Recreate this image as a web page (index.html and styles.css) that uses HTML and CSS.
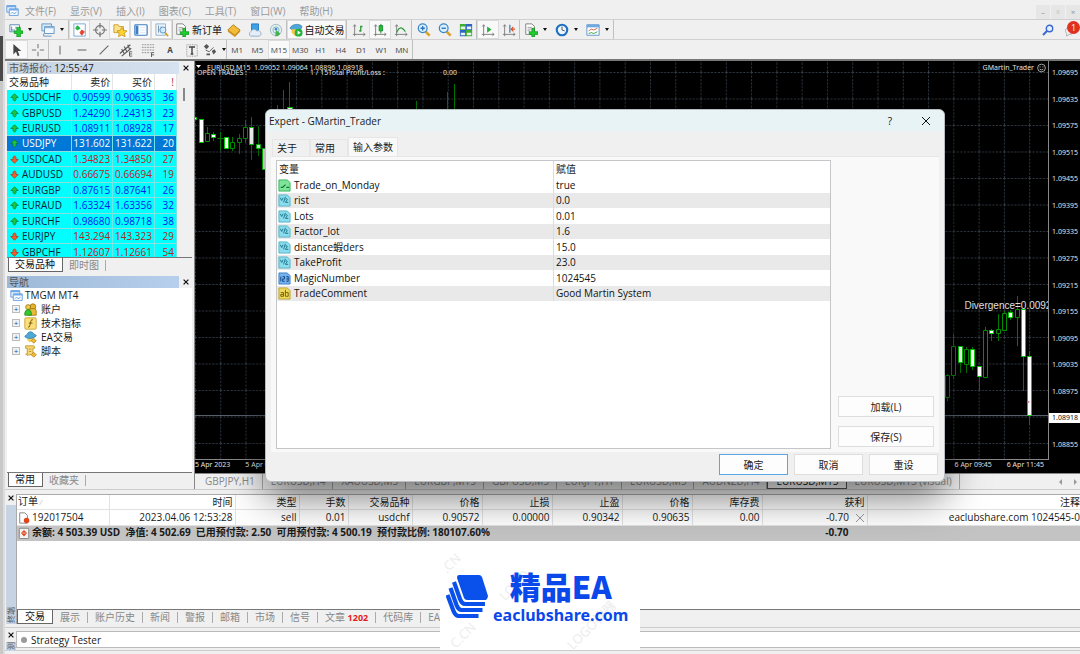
FILE: index.html
```html
<!DOCTYPE html>
<html lang="zh-CN">
<head>
    <meta charset="UTF-8">
    <meta name="viewport" content="width=device-width, initial-scale=1.0">
    <title>TMGM MT4</title>
    <link rel="stylesheet" href="styles.css">
</head>
<body>
    <!-- Shared icons -->
    <svg class="sprite" aria-hidden="true">
        <symbol id="i-windows" viewBox="0 0 16 16"><path d="M1 2h11v8H1z" fill="#eaf4ff" stroke="#4b8fd8"/><path d="M1 2h11v2H1z" fill="#6fa9e6"/><path d="M4 6h11v8H4z" fill="#fff" stroke="#4b8fd8"/><path d="M4 6h11v2H4z" fill="#6fa9e6"/><path d="M6 12l2-2 2 2 3-2" fill="none" stroke="#4b8fd8"/></symbol>
        <symbol id="i-newchart" viewBox="0 0 16 16"><path d="M1 2h11v8H1z" fill="#fff" stroke="#4f83ad"/><path d="M3 4v5M3 8h4M8 4v3" stroke="#4f83ad" fill="none"/><path d="M9 5h4v4h3v3h-3v4H9v-4H6V9h3z" fill="#1fd02f" stroke="#0b8a1a" stroke-width=".8"/></symbol>
        <symbol id="i-profiles" viewBox="0 0 16 16"><path d="M1 1h11v8H1z" fill="#d9eafa" stroke="#5b8fc0"/><path d="M4 4h11v8H4z" fill="#f2f8fe" stroke="#5b8fc0"/><path d="M4 4h11v2H4z" fill="#86b4dd"/><path d="M3 12v3h9" fill="none" stroke="#5b8fc0"/></symbol>
        <symbol id="i-market" viewBox="0 0 16 16"><path d="M1 1h13v14H1z" fill="#fff" stroke="#6fa3d4"/><path d="M5 3l3 3-3 2-2-2z" fill="#1eb53a" stroke="#1eb53a"/><path d="M10 8l3 2-3 4-2-3z" fill="#e5432a" stroke="#e5432a"/></symbol>
        <symbol id="i-target" viewBox="0 0 16 16"><circle cx="8" cy="8" r="5" fill="none" stroke="#777" stroke-width="1.4"/><path d="M8 0v6M8 10v6M0 8h6M10 8h6" stroke="#777" stroke-width="1.4"/></symbol>
        <symbol id="i-star" viewBox="0 0 16 16"><path d="M1 2h5l1 2h5v7H1z" fill="#fbe28a" stroke="#c89b26"/><path d="M10 5l2 3.5 4 .5-3 2.6.8 4.1L10 13.800l-3.800 1.900.8-4.100L4.500 9l3.700-.5z" fill="#ffd22e" stroke="#c08a10" stroke-width=".8"/></symbol>
        <symbol id="i-panel" viewBox="0 0 16 16"><rect x="1" y="2" width="14" height="12" rx="1" fill="#fff" stroke="#3f7fc0" stroke-width="1.400"/><path d="M2 3h3v10H2z" fill="#3f7fc0"/><path d="M7 5h6M7 8h6M7 11h6" stroke="#d7e5f3"/></symbol>
        <symbol id="i-tester" viewBox="0 0 16 16"><path d="M1 1h11v13H1z" fill="#edf4fb" stroke="#8caeca"/><path d="M4 3v8M7 4v6" stroke="#6b8aa4"/><circle cx="9" cy="8" r="3.500" fill="#cfe8fb" fill-opacity=".8" stroke="#4e92cc"/><path d="M11.500 11l3.500 4" stroke="#d8a22c" stroke-width="2"/></symbol>
        <symbol id="i-order" viewBox="0 0 16 16"><path d="M2 1h7l3 3v9H2z" fill="#fff" stroke="#777"/><path d="M4 5h5M4 7h5M4 9h3" stroke="#999"/><path d="M9 6h3v4h4v3h-4v3H9v-3H6v-3h3z" fill="#1fd02f" stroke="#0b8a1a" stroke-width=".8"/></symbol>
        <symbol id="i-gold" viewBox="0 0 16 16"><path d="M1 8l6-6 8 6-6 6z" fill="#f1bd3a" stroke="#b07a12"/><path d="M1 8v2l8 6v-2zM9 16l6-6V8l-6 6z" fill="#cf9220"/></symbol>
        <symbol id="i-cloud" viewBox="0 0 16 16"><path d="M4 1h8v8H4z" fill="#3aa0e8" stroke="#2677bd"/><path d="M3 15a3 3 0 0 1 0-5 4 4 0 0 1 7-1 3 3 0 0 1 3 6z" fill="#e5eef8" stroke="#8ea8c6"/></symbol>
        <symbol id="i-signal" viewBox="0 0 16 16"><circle cx="8" cy="8" r="6.500" fill="#e4eef2" stroke="#9db6bd"/><circle cx="8" cy="8" r="3.500" fill="none" stroke="#7bb5b8"/><path d="M8 8l-1 7a6 6 0 0 0 6-3z" fill="#45b14e"/><circle cx="8" cy="7" r="1.500" fill="#3e8dd0"/></symbol>
        <symbol id="i-auto" viewBox="0 0 16 16"><path d="M1 6c2-5 11-6 14-2l-2 4H4z" fill="#4fa6d8" stroke="#2a76a8" stroke-width=".7"/><path d="M3 7h9v5l-5 3-4-4z" fill="#f2c84a"/><circle cx="11" cy="11" r="4.500" fill="#1eb53a"/><path d="M9.800 8.500v5l3.700-2.500z" fill="#fff"/></symbol>
        <symbol id="i-bars" viewBox="0 0 16 16"><path d="M3 2v13M1 13h14M1.500 4L3 2l1.500 2M13 11.500l2 1.500-2 1.500" fill="none" stroke="#777"/><path d="M10 3v7M10 4h2M8 9h2" stroke="#2a9a35" stroke-width="1.500"/></symbol>
        <symbol id="i-candle" viewBox="0 0 16 16"><path d="M3 2v13M1 13h14M1.500 4L3 2l1.500 2M13 11.500l2 1.500-2 1.500" fill="none" stroke="#777"/><path d="M9 1v11" stroke="#15862a"/><path d="M7 3h4v6H7z" fill="#22c23a" stroke="#15862a"/></symbol>
        <symbol id="i-line" viewBox="0 0 16 16"><path d="M3 2v13M1 13h14M1.500 4L3 2l1.500 2M13 11.500l2 1.500-2 1.500" fill="none" stroke="#777"/><path d="M3 11c3-7 6-7 10-1" fill="none" stroke="#2a9a35" stroke-width="1.300"/></symbol>
        <symbol id="i-zoomin" viewBox="0 0 16 16"><path d="M9.500 9.500l5 5" stroke="#d8a22c" stroke-width="3"/><circle cx="6.500" cy="6" r="5" fill="#d8effd" stroke="#3b86c6" stroke-width="1.400"/><path d="M4 6h5M6.500 3.500v5" stroke="#2b76b8" stroke-width="1.500"/></symbol>
        <symbol id="i-zoomout" viewBox="0 0 16 16"><path d="M9.500 9.500l5 5" stroke="#d8a22c" stroke-width="3"/><circle cx="6.500" cy="6" r="5" fill="#d8effd" stroke="#3b86c6" stroke-width="1.400"/><path d="M4 6h5" stroke="#2b76b8" stroke-width="1.500"/></symbol>
        <symbol id="i-tile" viewBox="0 0 16 16"><path d="M1 1h7v7H1zM8 8h7v7H8z" fill="#3fae2e"/><path d="M8 1h7v7H8zM1 8h7v7H1z" fill="#2f66c4"/><path d="M2 4h5v3H2zM9 4h5v3H9zM2 11h5v3H2zM9 11h5v3H9z" fill="#e7f1f6"/></symbol>
        <symbol id="i-scroll" viewBox="0 0 16 16"><path d="M3 2v13M1 13h14M1.500 4L3 2l1.500 2M13 11.500l2 1.500-2 1.500" fill="none" stroke="#777"/><path d="M7 4l5 3.500L7 11z" fill="#22b03a"/></symbol>
        <symbol id="i-shift" viewBox="0 0 16 16"><path d="M3 2v13M1 13h14M1.500 4L3 2l1.500 2M13 11.500l2 1.500-2 1.500" fill="none" stroke="#777"/><path d="M9 2v9" stroke="#3b7ab8" stroke-width="1.400"/><path d="M15 7h-4M13 4.500L10.500 7 13 9.500" fill="none" stroke="#d8532a" stroke-width="1.400"/></symbol>
        <symbol id="i-clock" viewBox="0 0 16 16"><circle cx="8" cy="8" r="6" fill="#eaf6ff" stroke="#1f6fc0" stroke-width="2.400"/><path d="M8 4v4l3 1" fill="none" stroke="#444"/></symbol>
        <symbol id="i-template" viewBox="0 0 16 16"><path d="M1 2h14v12H1z" fill="#fff" stroke="#4f8fca"/><path d="M1 2h14v3H1z" fill="#6fa9e0"/><path d="M3 9l3-2 3 1 4-2" fill="none" stroke="#d0552f"/><path d="M3 12l3-1 3 1 4-2" fill="none" stroke="#2a9a35"/></symbol>
        <symbol id="i-cursor" viewBox="0 0 16 16"><path d="M5 1v12l3-3 2 5 2-1-2-5h4z" fill="#444"/></symbol>
        <symbol id="i-cross" viewBox="0 0 16 16"><path d="M8 1v5M8 10v5M1 8h5M10 8h5" stroke="#777" stroke-width="1.200"/></symbol>
        <symbol id="i-vline" viewBox="0 0 16 16"><path d="M8 3v10" stroke="#666" stroke-width="1.200"/></symbol>
        <symbol id="i-hline" viewBox="0 0 16 16"><path d="M3 8h10" stroke="#666" stroke-width="1.200"/></symbol>
        <symbol id="i-trend" viewBox="0 0 16 16"><path d="M3 13L13 3" stroke="#666" stroke-width="1.200"/></symbol>
        <symbol id="i-channel" viewBox="0 0 16 16"><path d="M1 12L13 2M3 15L14 6M3 7l3 5M6 4l3 6M10 2l2 5" stroke="#555" stroke-width="1.200"/><path d="M15 10h-3v5h3M12 12.500h3" fill="none" stroke="#555"/></symbol>
        <symbol id="i-fibo" viewBox="0 0 16 16"><path d="M1 2h14M1 5h14M1 8h14M1 11h10" stroke="#888" stroke-dasharray="2 1"/><path d="M15 11h-3v5M12 13.500h3" fill="none" stroke="#555"/></symbol>
        <symbol id="i-shapes" viewBox="0 0 16 16"><path d="M1 4l3-3 3 3-3 3zM10 9l3-2 2 3-3 3zM4 12h4v2H4z" fill="#555"/><path d="M3 8l4 2 5-5" fill="none" stroke="#555"/></symbol>
        <symbol id="i-label" viewBox="0 0 16 16"><rect x="2" y="2" width="12" height="13" fill="none" stroke="#888" stroke-dasharray="1 1"/><path d="M4.500 4.500h7M8 4.500v8M6.500 12.500h3" stroke="#444" stroke-width="1.600"/></symbol>
        <symbol id="i-up" viewBox="0 0 12 12"><path d="M6 1l5 5H8v3L6 11 4 9V6H1z" fill="#1fc63c" stroke="#0a7c33"/></symbol>
        <symbol id="i-down" viewBox="0 0 12 12"><path d="M6 11L1 6h3V3l2-2 2 2v3h3z" fill="#f0602f" stroke="#b5300f"/></symbol>
        <symbol id="i-accounts" viewBox="0 0 16 16"><circle cx="11" cy="4.500" r="3.500" fill="#e6b52d" stroke="#9a7410"/><path d="M5 15V9q1-2 3-2h5q2 0 2 3v5z" fill="#e9bd35" stroke="#9a7410"/><circle cx="5" cy="5" r="3" fill="#f0cb4c" stroke="#9a7410"/><path d="M1 15v-3q1-4 4-4t4 4v3z" fill="#38c72a" stroke="#1f8a17"/></symbol>
        <symbol id="i-function" viewBox="0 0 16 16"><rect x="1" y="1" width="14" height="14" rx="1.500" fill="#fbe07a" stroke="#c59b28"/><path d="M11 3.500q-2-1-2.500 1.500l-1.500 6q-.5 2-2 1.500M6 7.500h4.500" fill="none" stroke="#7a5a10" stroke-width="1.200"/></symbol>
        <symbol id="i-expert" viewBox="0 0 16 16"><path d="M4 8h7v4l-4 2-3-3z" fill="#f0cf60"/><path d="M1 7c0-2 3-2 3-3 1-4 7-4 8 0 2 0 3 1 3 2-4 4-11 4-14 1z" fill="#4fa9d6" stroke="#2475a0" stroke-width=".8"/><path d="M12 9l3 3-3 3-3-3z" fill="#f0bd3a" stroke="#b88414"/></symbol>
        <symbol id="i-script" viewBox="0 0 16 16"><path d="M2 1h10q2 1 1 3h-2v8H6L4 13 2 11h2V4H2z" fill="#f5d775" stroke="#b98f22"/><path d="M6 5h3M6 8h3" stroke="#b98f22"/><path d="M12 9l3 3-3 3-3-3z" fill="#f0bd3a" stroke="#b88414"/></symbol>
        <symbol id="i-bool" viewBox="0 0 14 14"><path d="M1 1h9l3 3v9H1z" fill="#7fe39a" stroke="#35b35a"/><path d="M3 9h2l3-3M9 9h3" fill="none" stroke="#0e7a33" stroke-width="1.300"/></symbol>
        <symbol id="i-double" viewBox="0 0 14 14"><path d="M1 1h9l3 3v9H1z" fill="#8bdcec" stroke="#55b2c6"/><path d="M2.500 4l1.500 3 1.500-3M8 3L6 9M8 5.500q2-1 2 .5L8 9h3" fill="none" stroke="#18748c"/></symbol>
        <symbol id="i-int" viewBox="0 0 14 14"><path d="M1 1h9l3 3v9H1z" fill="#74b2ee" stroke="#3f7fc4"/><path d="M3 5v5M5 5h2v2.500H5V10h2M9 5h2v5H9M9 7.500h2" fill="none" stroke="#0f417c"/></symbol>
        <symbol id="i-string" viewBox="0 0 14 14"><path d="M1 1h9l3 3v9H1z" fill="#efd95d" stroke="#bda22c"/><path d="M3 6h3v4H3V8h3M8 3v7h3V6H8" fill="none" stroke="#735f08"/></symbol>
        <symbol id="i-doc" viewBox="0 0 14 14"><path d="M2 1h6l3 3v9H2z" fill="#fff" stroke="#777"/><circle cx="10" cy="10" r="3.200" fill="#e2441c"/></symbol>
        <symbol id="i-balance" viewBox="0 0 14 14"><rect x="1.500" y="1.500" width="11" height="12" rx="1" fill="#f4f4f4" stroke="#777"/><path d="M7 3.500L10.500 7 7 11 3.500 7z" fill="#e2441c"/><path d="M5 7h4" stroke="#fff" stroke-width=".8"/></symbol>
        <symbol id="i-x" viewBox="0 0 10 10"><path d="M1 1l8 8M9 1L1 9" fill="none" stroke="currentColor"/></symbol>
    </svg>

    <div class="frame">
    <div class="edge"></div>
    <div class="app">
        <header class="menubar">
            <svg class="app-icon"><use href="#i-windows"/></svg>
            <nav class="menu">
                <a href="#">文件(F)</a>
                <a href="#">显示(V)</a>
                <a href="#">插入(I)</a>
                <a href="#">图表(C)</a>
                <a href="#">工具(T)</a>
                <a href="#">窗口(W)</a>
                <a href="#">帮助(H)</a>
            </nav>
            <div class="win-controls">
                <button aria-label="Minimize">–</button>
                <button aria-label="Restore">▫</button>
                <button aria-label="Close">×</button>
            </div>
        </header>

        <div class="toolbar">
            <div class="group wide">
                <button class="drop"><svg class="icon"><use href="#i-newchart"/></svg></button>
                <button class="drop"><svg class="icon"><use href="#i-profiles"/></svg></button>
            </div>
            <div class="group five">
                <button class="on"><svg class="icon"><use href="#i-market"/></svg></button>
                <button><svg class="icon"><use href="#i-target"/></svg></button>
                <button class="on"><svg class="icon"><use href="#i-star"/></svg></button>
                <button class="on"><svg class="icon"><use href="#i-panel"/></svg></button>
                <button class="on"><svg class="icon"><use href="#i-tester"/></svg></button>
            </div>
            <div class="group order">
                <button class="text"><svg class="icon"><use href="#i-order"/></svg>新订单</button>
                <button><svg class="icon"><use href="#i-gold"/></svg></button>
                <button><svg class="icon"><use href="#i-cloud"/></svg></button>
                <button><svg class="icon"><use href="#i-signal"/></svg></button>
            </div>
            <div class="group auto">
                <button class="text on"><svg class="icon"><use href="#i-auto"/></svg>自动交易</button>
            </div>
            <div class="group three">
                <button><svg class="icon"><use href="#i-bars"/></svg></button>
                <button class="on"><svg class="icon"><use href="#i-candle"/></svg></button>
                <button><svg class="icon"><use href="#i-line"/></svg></button>
            </div>
            <div class="group three">
                <button><svg class="icon"><use href="#i-zoomin"/></svg></button>
                <button><svg class="icon"><use href="#i-zoomout"/></svg></button>
                <button><svg class="icon"><use href="#i-tile"/></svg></button>
            </div>
            <div class="group two">
                <button class="on"><svg class="icon"><use href="#i-scroll"/></svg></button>
                <button><svg class="icon"><use href="#i-shift"/></svg></button>
            </div>
            <div class="group last">
                <button class="drop"><svg class="icon"><use href="#i-order"/></svg></button>
                <button class="drop"><svg class="icon"><use href="#i-clock"/></svg></button>
                <button class="drop"><svg class="icon"><use href="#i-template"/></svg></button>
            </div>
            <div class="search">
                <button aria-label="Search"><svg class="lens" viewBox="0 0 12 12"><circle cx="7.500" cy="4.500" r="3.200" fill="#e4efff" stroke="#3a67d0" stroke-width="1.400"/><path d="M5 7l-4 4" stroke="#3a67d0" stroke-width="2"/></svg></button>
                <button class="chat" aria-label="Messages"><svg class="icon" viewBox="0 0 16 16"><path d="M6 5a5 4 0 0 1 0 8l-3 2v-3a4 4 0 0 1 3-7z" fill="#eee" stroke="#aaa"/></svg><span class="badge">1</span></button>
            </div>
        </div>

        <div class="toolbar second">
            <div class="group draw">
                <button class="on"><svg class="icon"><use href="#i-cursor"/></svg></button>
                <button><svg class="icon"><use href="#i-cross"/></svg></button>
            </div>
            <div class="group lines">
                <button><svg class="icon"><use href="#i-vline"/></svg></button>
                <button><svg class="icon"><use href="#i-hline"/></svg></button>
                <button><svg class="icon"><use href="#i-trend"/></svg></button>
                <button><svg class="icon"><use href="#i-channel"/></svg></button>
                <button><svg class="icon"><use href="#i-fibo"/></svg></button>
                <button class="letter">A</button>
                <button><svg class="icon"><use href="#i-label"/></svg></button>
                <button class="drop"><svg class="icon"><use href="#i-shapes"/></svg></button>
            </div>
            <div class="group frames">
                <button>M1</button>
                <button>M5</button>
                <button class="on">M15</button>
                <button>M30</button>
                <button>H1</button>
                <button>H4</button>
                <button>D1</button>
                <button>W1</button>
                <button>MN</button>
            </div>
        </div>

        <div class="main">
            <aside class="sidebar">
                <section class="market">
                    <div class="panel-title"><span class="caption">市场报价: <b>12:55:47</b></span><button aria-label="Close"><svg><use href="#i-x"/></svg></button></div>
                    <div class="quotes-wrap">
                        <table class="quotes">
                            <thead><tr><th class="sym">交易品种</th><th>卖价</th><th>买价</th><th class="spread">!</th></tr></thead>
                            <tbody>
                                <tr><td><svg><use href="#i-up"/></svg>USDCHF</td><td>0.90599</td><td>0.90635</td><td>36</td></tr>
                                <tr><td><svg><use href="#i-up"/></svg>GBPUSD</td><td>1.24290</td><td>1.24313</td><td>23</td></tr>
                                <tr><td><svg><use href="#i-up"/></svg>EURUSD</td><td>1.08911</td><td>1.08928</td><td>17</td></tr>
                                <tr class="selected"><td><svg><use href="#i-up"/></svg>USDJPY</td><td>131.602</td><td>131.622</td><td>20</td></tr>
                                <tr class="down"><td><svg><use href="#i-down"/></svg>USDCAD</td><td>1.34823</td><td>1.34850</td><td>27</td></tr>
                                <tr class="down"><td><svg><use href="#i-down"/></svg>AUDUSD</td><td>0.66675</td><td>0.66694</td><td>19</td></tr>
                                <tr><td><svg><use href="#i-up"/></svg>EURGBP</td><td>0.87615</td><td>0.87641</td><td>26</td></tr>
                                <tr><td><svg><use href="#i-up"/></svg>EURAUD</td><td>1.63324</td><td>1.63356</td><td>32</td></tr>
                                <tr><td><svg><use href="#i-up"/></svg>EURCHF</td><td>0.98680</td><td>0.98718</td><td>38</td></tr>
                                <tr class="down"><td><svg><use href="#i-down"/></svg>EURJPY</td><td>143.294</td><td>143.323</td><td>29</td></tr>
                                <tr class="down"><td><svg><use href="#i-down"/></svg>GBPCHF</td><td>1.12607</td><td>1.12661</td><td>54</td></tr>
                            </tbody>
                        </table>
                        <div class="scroll"><span class="thumb"></span></div>
                    </div>
                    <div class="tabs"><button class="active">交易品种</button><button>即时图</button></div>
                </section>
                <section class="navigator">
                    <div class="panel-title"><span class="caption">导航</span><button aria-label="Close"><svg><use href="#i-x"/></svg></button></div>
                    <ul class="tree">
                        <li class="root"><svg><use href="#i-windows"/></svg>TMGM MT4</li>
                        <li><span class="plus">+</span><svg><use href="#i-accounts"/></svg>账户</li>
                        <li><span class="plus">+</span><svg><use href="#i-function"/></svg>技术指标</li>
                        <li><span class="plus">+</span><svg><use href="#i-expert"/></svg>EA交易</li>
                        <li><span class="plus">+</span><svg><use href="#i-script"/></svg>脚本</li>
                    </ul>
                    <div class="tabs"><button class="active">常用</button><button>收藏夹</button></div>
                </section>
            </aside>

            <section class="workspace">
                <div class="chart">
                    <div class="plot">
                        <svg class="canvas" viewBox="195 62 854 398" preserveAspectRatio="xMaxYMin slice">
                            <defs>
                                <pattern id="grid" x="221.200" y="73" width="25.280" height="26.500" patternUnits="userSpaceOnUse">
                                    <path d="M.5 0v26.500M0 .5h25.280" stroke="#323b45" stroke-dasharray="2 1.500" fill="none"/>
                                </pattern>
                            </defs>
                            <rect x="195" y="62" width="854" height="398" fill="url(#grid)"/>
                            <path d="M195 416.500h854" stroke="#56616c"/>
                            <!-- wicks -->
                            <path d="M195.500 117v20M202.500 120v24M208.500 128v15M214.500 133v9M221.500 133v18M218.500 139.500h6M227.500 138v12M233.500 138v14M240.500 135v20M246.500 121v23M252.500 118v43M259.500 127v30M278.500 106v6M284.500 91v20M290.500 83v28M417.500 102v10M448.500 93v18M455.500 85v26M948.500 375v27M954.500 335v45M961.500 347v27M967.500 348v26M973.500 348v23M980.500 367v24M986.500 328v50M992.500 330v12M999.500 315v27M1005.500 312v20M1011.500 311v10M1018.500 297v50M1024.500 310v82M1030.500 352v74" stroke="#007800"/>
                            <!-- bull bodies -->
                            <g fill="#000" stroke="#009000">
                                <path d="M206.500 134.500h4v8h-4zM231.500 143.500h4v6h-4zM238.500 139.500h4v4h-4zM244.500 128.500h4v11h-4zM946.500 376.500h4v22h-4zM952.500 347.500h4v29h-4zM965.500 350.500h4v15h-4zM984.500 331.500h4v47h-4zM997.500 330.500h4v4h-4zM1003.500 314.500h4v17h-4zM1016.500 310.500h4v8h-4z"/>
                            </g>
                            <!-- bear bodies -->
                            <g fill="#fff" stroke="#00d000">
                                <path d="M195 118.500h2.500v2H195zM200.500 120.500h4v23h-4zM212.500 135.500h4v3h-4zM225.500 138.500h4v11h-4zM250.500 128.500h4v17h-4zM257.500 145.500h4v4h-4zM263.500 149.500h4v21h-4zM288.500 108.500h5v3h-5zM959.500 347.500h4v16h-4zM971.500 350.500h4v17h-4zM978.500 367.500h4v10h-4zM990.500 331.500h4v3h-4zM1009.500 313.500h4v5h-4zM1022.500 310.500h4v47h-4zM1028.500 357.500h4v59h-4z"/>
                            </g>
                            <circle cx="1029.500" cy="403" r="1" fill="#e08a9a"/>
                            <path d="M197 66h5l-2.500 3z" fill="#fff"/>
                        </svg>
                        <p class="chart-info">EURUSD,M15&nbsp; 1.09052 1.09064 1.08896 1.08918</p>
                        <p class="trades">OPEN TRADES :</p>
                        <p class="profit">1 / 15Total Profit/Loss :</p>
                        <p class="amount">0.00</p>
                        <p class="expert-name">GMartin_Trader <svg viewBox="0 0 10 10"><circle cx="5" cy="5" r="4.300" fill="none" stroke="#ddd" stroke-width=".8"/><path d="M3 6.200q2 2 4 0M3.400 3.200v1.200M6.600 3.200v1.200" fill="none" stroke="#ddd" stroke-width=".8"/></svg></p>
                        <p class="divergence">Divergence=0.00922</p>
                    </div>
                    <ul class="prices">
                        <li>1.09695</li><li>1.09635</li><li>1.09575</li><li>1.09515</li><li>1.09455</li>
                        <li>1.09395</li><li>1.09335</li><li>1.09275</li><li>1.09215</li><li>1.09155</li>
                        <li>1.09095</li><li>1.09035</li><li>1.08975</li><li class="current">1.08918</li><li>1.08855</li>
                    </ul>
                    <div class="times">
                        <div><span>5 Apr 2023</span><span>5 Apr 04:45</span></div>
                        <div><span>6 Apr 09:45</span><span>6 Apr 11:45</span></div>
                    </div>
                </div>
                <div class="chart-tabs">
                    <button>GBPJPY,H1</button>
                    <button>EURUSD,H4</button>
                    <button>XAUUSD,M5</button>
                    <button>EURGBP,M15</button>
                    <button>GBPUSD,M5</button>
                    <button>EURJPY,H1</button>
                    <button>EURUSD,M5</button>
                    <button>AUDNZD,H4</button>
                    <button class="active">EURUSD,M15</button>
                    <button>EURUSD,M15 (visual)</button>
                    <span class="arrows"><i class="left"></i><i class="right"></i></span>
                </div>

                <!-- Expert properties dialog -->
                <div class="dialog" role="dialog" aria-label="Expert - GMartin_Trader">
                    <div class="dialog-title">
                        <span>Expert - GMartin_Trader</span>
                        <button class="help" aria-label="Help">?</button>
                        <button aria-label="Close"><svg><use href="#i-x"/></svg></button>
                    </div>
                    <div class="dialog-tabs">
                        <button>关于</button>
                        <button>常用</button>
                        <button class="active">输入参数</button>
                    </div>
                    <div class="dialog-page">
                        <div class="inputs-wrap">
                            <table class="inputs">
                                <thead><tr><th>变量</th><th>赋值</th></tr></thead>
                                <tbody>
                                    <tr><td><svg><use href="#i-bool"/></svg>Trade_on_Monday</td><td>true</td></tr>
                                    <tr><td><svg><use href="#i-double"/></svg>rist</td><td>0.0</td></tr>
                                    <tr><td><svg><use href="#i-double"/></svg>Lots</td><td>0.01</td></tr>
                                    <tr><td><svg><use href="#i-double"/></svg>Factor_lot</td><td>1.6</td></tr>
                                    <tr><td><svg><use href="#i-double"/></svg>distance蝦ders</td><td>15.0</td></tr>
                                    <tr><td><svg><use href="#i-double"/></svg>TakeProfit</td><td>23.0</td></tr>
                                    <tr><td><svg><use href="#i-int"/></svg>MagicNumber</td><td>1024545</td></tr>
                                    <tr><td><svg><use href="#i-string"/></svg>TradeComment</td><td>Good Martin System</td></tr>
                                </tbody>
                            </table>
                        </div>
                        <div class="side-buttons">
                            <button class="btn">加载(L)</button>
                            <button class="btn">保存(S)</button>
                        </div>
                    </div>
                    <div class="dialog-footer">
                        <button class="btn primary">确定</button>
                        <button class="btn">取消</button>
                        <button class="btn">重设</button>
                    </div>
                </div>
            </section>
        </div>

        <section class="terminal">
            <div class="rail"><button aria-label="Close"><svg><use href="#i-x"/></svg></button><span class="rail-label">终端</span></div>
            <div class="terminal-body">
                <table class="orders">
                    <colgroup><col class="c-id"><col class="c-time"><col class="c-type"><col class="c-lots"><col class="c-sym"><col class="c-price"><col class="c-price"><col class="c-price"><col class="c-price"><col class="c-price"><col class="c-profit"><col></colgroup>
                    <thead><tr><th class="id">订单 <small>⁄</small></th><th>时间</th><th>类型</th><th>手数</th><th>交易品种</th><th>价格</th><th>止损</th><th>止盈</th><th>价格</th><th>库存费</th><th>获利</th><th>注释</th></tr></thead>
                    <tbody>
                        <tr><td class="id"><svg><use href="#i-doc"/></svg>192017504</td><td>2023.04.06 12:53:28</td><td>sell</td><td>0.01</td><td>usdchf</td><td>0.90572</td><td>0.00000</td><td>0.90342</td><td>0.90635</td><td>0.00</td><td class="profit-cell">-0.70 <svg class="close-order"><use href="#i-x"/></svg></td><td>eaclubshare.com 1024545-0</td></tr>
                        <tr class="balance"><td class="id" colspan="10"><svg><use href="#i-balance"/></svg>余额: 4 503.39 USD&nbsp; 净值: 4 502.69&nbsp; 已用预付款: 2.50&nbsp; 可用预付款: 4 500.19&nbsp; 预付款比例: 180107.60%</td><td class="total">-0.70</td><td></td></tr>
                    </tbody>
                </table>
                <div class="tabs terminal-tabs">
                    <button class="active">交易</button>
                    <button>展示</button>
                    <button>账户历史</button>
                    <button>新闻</button>
                    <button>警报</button>
                    <button>邮箱</button>
                    <button>市场</button>
                    <button>信号</button>
                    <button>文章 <b>1202</b></button>
                    <button>代码库</button>
                    <button>EA</button>
                </div>
            </div>
        </section>

        <section class="strategy">
            <div class="rail"><button aria-label="Close"><svg><use href="#i-x"/></svg></button><span class="rail-label">测</span></div>
            <div class="strategy-body"><span class="dot"></span>Strategy Tester</div>
        </section>
        <footer class="status"></footer>

        <!-- Brand stamp -->
        <div class="brand">
            <span class="mark m1">.CN</span>
            <span class="mark m2">LOGO</span>
            <span class="mark m3">C.CN</span>
            <span class="mark m4">LOGO神器</span>
            <svg class="logo" viewBox="0 0 42 44"><path d="M13 1h20q2 0 3 2l6 19q0 2-2 4H21q-2 0-3-2L11 4q0-3 2-3z" fill="#0a50ea"/><path d="M8 8l6 17q2 5 5 5h20M4.500 14l6 17q2 5 5 5h21M1.500 21l6 16q2 5 5 5h20" fill="none" stroke="#0a50ea" stroke-width="4.200"/></svg>
            <div class="brand-text"><strong>精品EA</strong><span>eaclubshare.com</span></div>
        </div>
    </div>
    </div>
</body>
</html>
```
FILE: styles.css
```css
/* Reset & Basic Styling */
* {
    margin: 0;
    padding: 0;
    box-sizing: border-box;
}
body {
    font-family: "Open Sans", "Noto Sans CJK SC", sans-serif;
    font-size: 10px;
    line-height: 14px;
    background: #f0f0f0;
    color: #1a1a1a;
    overflow: hidden;
}
button {
    font: inherit;
    color: inherit;
    background: none;
    border: none;
}
ul {
    list-style: none;
}
svg {
    display: block;
    flex: none;
}
.sprite {
    position: absolute;
    width: 0;
    height: 0;
}
.frame {
    display: flex;
    height: 100vh;
}
.edge {
    width: 5px;
    background: linear-gradient(#d8d8d8 36px, #4a4a4a 36px, #4a4a4a 81px, #c8c8c8 81px);
    border-right: 2px solid #dcdcdc;
}
.app {
    position: relative;
    flex: 1;
    min-width: 0;
    display: flex;
    flex-direction: column;
}

/* Menu */
.menubar {
    display: flex;
    align-items: flex-end;
    height: 20px;
    padding-left: 1px;
    border-bottom: 1px solid #d0d0d0;
}
.app-icon {
    width: 13px;
    height: 13px;
    margin-bottom: 2px;
}
.menu {
    display: flex;
    gap: 14px;
    padding: 0 0 1px 6px;
}
.menu a {
    color: #9a9a9a;
    text-decoration: none;
}
.win-controls {
    display: flex;
    gap: 1px;
    margin-left: auto;
}
.win-controls button {
    width: 14px;
    height: 14px;
    font-size: 8px;
    line-height: 12px;
    color: #8796a5;
    background: #e6e6e6;
}

/* Toolbars */
.toolbar {
    display: flex;
    height: 20px;
    border-bottom: 1px solid #d0d0d0;
}
.toolbar.second {
    height: 21px;
    border-bottom: 2px solid #777;
}
.group {
    display: flex;
    border-right: 1px solid #c0c0c0;
}
.group button {
    flex: 1;
    display: flex;
    align-items: center;
    justify-content: center;
}
.group .on {
    background: #f9f9f9;
    border: 1px solid #dcdcdc;
}
.icon {
    width: 14px;
    height: 14px;
}
.drop::after {
    content: "";
    margin-left: 5px;
    border: 2px solid transparent;
    border-top: 3px solid #111;
    border-bottom: 0;
}
.wide { width: 64px; }
.five { width: 104px; }
.order { width: 114px; }
.auto { width: 60px; }
.three { width: 65px; padding-left: 2px; }
.two { width: 43px; }
.last { width: 94px; }
.draw { width: 44px; }
.lines { width: 178px; }
.frames { width: 186px; }
.group .text {
    flex: none;
    gap: 3px;
    color: #111;
    white-space: nowrap;
}
.order .text {
    width: 51px;
}
.auto .text {
    width: 59px;
    gap: 2px;
}
.second .group button {
    color: #444;
    font-size: 8px;
}
.second .letter {
    font-weight: bold;
}
.search {
    display: flex;
    align-items: center;
    gap: 10px;
    margin-left: auto;
    padding-right: 2px;
}
.lens {
    width: 12px;
    height: 12px;
}
.chat {
    position: relative;
}
.badge {
    position: absolute;
    top: -2px;
    left: 3px;
    width: 13px;
    height: 13px;
    border-radius: 50%;
    background: #e03020;
    color: #fff;
    font-size: 9px;
    line-height: 13px;
    text-align: center;
}

/* Sidebar */
.main {
    flex: 1;
    min-height: 0;
    display: flex;
}
.sidebar {
    width: 190px;
    display: flex;
    flex-direction: column;
    gap: 4px;
    padding: 1px 2px 2px;
    border-right: 1px solid #888;
}
.panel-title {
    display: flex;
    align-items: center;
    height: 12px;
}
.panel-title .caption {
    flex: 1;
    line-height: 12px;
    padding-left: 2px;
    background: linear-gradient(90deg, #c6d3e2, #d6e2ef);
    color: #555;
}
.caption b {
    font-weight: normal;
    color: #222;
}
.navigator .caption {
    background: linear-gradient(90deg, #9db9d8, #b6cfec);
}
.panel-title button {
    width: 12px;
    margin-left: 1px;
    padding-left: 3px;
}
.panel-title svg,
.rail svg {
    width: 6px;
    height: 6px;
    color: #111;
    stroke-width: 2;
}
.quotes-wrap {
    display: flex;
    height: 184px;
    overflow: hidden;
    border-bottom: 1px solid #777;
}
.quotes {
    width: 170px;
    height: 186px;
    border-collapse: collapse;
    table-layout: fixed;
}
.quotes th {
    height: 16px;
    background: #fff;
    font-weight: normal;
    text-align: right;
    padding-right: 2px;
    border-right: 1px solid #e4e4e4;
}
.quotes .sym {
    width: 64px;
    text-align: left;
    padding-left: 2px;
}
.quotes .spread {
    width: 22px;
    color: #a33;
}
.quotes td {
    background: #00ffff;
    color: #0020f0;
    text-align: right;
    line-height: 12px;
    padding-right: 2px;
    border-right: 1px solid #6fe6e6;
    border-bottom: 1px solid #8fdede;
}
.quotes td:first-child {
    text-align: left;
    color: #123;
    padding-left: 3px;
}
.quotes td svg {
    display: inline-block;
    width: 9px;
    height: 9px;
    margin-right: 3px;
    vertical-align: -1px;
}
.quotes .down td {
    color: #c02020;
}
.quotes .down td:first-child {
    color: #123;
}
.quotes .selected td,
.quotes .selected td:first-child {
    background: #0078d7;
    color: #fff;
}
.scroll {
    flex: 1;
    padding: 14px 0 0 6px;
}
.thumb {
    display: block;
    width: 2px;
    height: 13px;
    background: #888;
}
.tabs {
    display: flex;
    height: 14px;
    padding-left: 1px;
    color: #888;
}
.tabs button {
    padding: 0 8px 0 7px;
    line-height: 13px;
    position: relative;
}
.tabs button:not(.active)::after {
    content: "";
    position: absolute;
    right: 0;
    top: 2px;
    height: 11px;
    border-right: 1px solid #aaa;
}
.sidebar .tabs button {
    padding: 0 7px 0 6px;
}
.tabs .active {
    padding: 0 7px;
    background: #fff;
    color: #111;
    border: 1px solid #666;
    border-top: 0;
}
.navigator {
    flex: 1;
    display: flex;
    flex-direction: column;
}
.tree {
    flex: 1;
    background: #fff;
    border-bottom: 1px solid #777;
    padding-left: 3px;
}
.tree li {
    display: flex;
    align-items: center;
    gap: 4px;
    height: 14px;
    padding-left: 2px;
}
.tree .root {
    gap: 2px;
    padding-left: 0;
}
.tree svg {
    width: 13px;
    height: 13px;
}
.plus {
    width: 8px;
    height: 8px;
    border: 1px solid #bbb;
    background: #f2f2f2;
    color: #2b4fa0;
    font-size: 8px;
    line-height: 6px;
    text-align: center;
}

/* Chart */
.workspace {
    position: relative;
    flex: 1;
    min-width: 0;
    display: flex;
    flex-direction: column;
}
.chart {
    flex: 1;
    min-height: 0;
    display: grid;
    grid-template: 1fr 13px / 1fr 31px;
    background: #000;
    color: #e0e0e0;
    font-family: "Noto Sans", sans-serif;
    font-size: 7px;
    line-height: 10px;
}
.plot {
    position: relative;
    overflow: hidden;
    border-right: 1px solid #888;
    border-bottom: 1px solid #888;
}
.canvas {
    width: 100%;
    height: 100%;
}
.plot p {
    position: absolute;
    white-space: nowrap;
}
.plot .chart-info {
    top: 2px;
    left: 12px;
}
.plot .trades {
    top: 7px;
    left: 2px;
}
.plot .profit {
    top: 7px;
    left: 115px;
}
.plot .amount {
    top: 7px;
    left: 248px;
}
.plot .expert-name {
    top: 2px;
    right: 2px;
    display: flex;
    gap: 3px;
}
.expert-name svg {
    width: 9px;
    height: 10px;
}
.plot .divergence {
    top: 238px;
    right: -9px;
    font-family: "Liberation Sans", sans-serif;
    font-size: 10px;
    line-height: 14px;
}
.prices {
    display: flex;
    flex-direction: column;
    justify-content: space-between;
    padding: 7px 0 10px;
}
.prices li {
    padding-left: 3px;
}
.prices .current {
    background: #fff;
    color: #111;
}
.times {
    grid-column: 1 / 3;
    display: flex;
    justify-content: space-between;
    padding-right: 36px;
}
.times div {
    display: flex;
    gap: 15px;
}
.chart-tabs {
    display: flex;
    height: 16px;
    border-top: 1px solid #888;
    color: #888;
}
.chart-tabs button {
    padding: 0 7px 0 8px;
    line-height: 13px;
    border-right: 1px solid #aaa;
    white-space: nowrap;
}
.chart-tabs .active {
    color: #111;
    background: #fff;
    border: 1px solid #555;
    border-top: 0;
}
.chart-tabs button:first-child {
    padding-left: 10px;
}
.arrows {
    display: flex;
    align-items: center;
    gap: 12px;
    margin-left: auto;
    padding-right: 3px;
}
.arrows i {
    border: 3px solid transparent;
}
.arrows .left {
    border-right-color: #999;
    border-left: 0;
}
.arrows .right {
    border-left-color: #999;
    border-right: 0;
}

/* Dialog */
.dialog {
    position: absolute;
    z-index: 2;
    top: 48px;
    left: 70px;
    right: 135px;
    background: #f0f0f0;
    border: 1px solid #b8bcc0;
    border-radius: 6px;
    box-shadow: 0 14px 40px rgba(0, 0, 0, 0.55);
    overflow: hidden;
}
.dialog-title {
    display: flex;
    align-items: center;
    height: 21px;
    padding-left: 3px;
    background: #e8f3f6;
}
.dialog-title span {
    flex: 1;
}
.dialog-title button {
    width: 36px;
    display: flex;
    justify-content: center;
    color: #111;
}
.dialog-title svg {
    width: 10px;
    height: 10px;
}
.dialog-tabs {
    display: flex;
    align-items: flex-end;
    height: 25px;
    padding-left: 6px;
}
.dialog-tabs button {
    width: 38px;
    height: 17px;
    padding-right: 8px;
    border: 1px solid #e6e6e6;
    border-bottom: 0;
}
.dialog-tabs .active {
    width: 50px;
    height: 19px;
    padding: 0;
    background: #f9f9f9;
}
.dialog-page {
    display: flex;
    justify-content: space-between;
    height: 296px;
    margin: 0 5px;
    padding: 3px 5px;
    background: #f9f9f9;
    border-top: 1px solid #e6e6e6;
}
.inputs-wrap {
    flex: 1;
    margin-right: 7px;
    background: #fff;
    border: 1px solid #c4c6ca;
}
.inputs {
    width: 100%;
    height: 140px;
    border-collapse: collapse;
    table-layout: fixed;
}
.inputs th {
    height: 16px;
    font-weight: normal;
    text-align: left;
    padding-left: 2px;
}
.inputs td {
    line-height: 14px;
    padding-left: 2px;
    color: #111;
}
.inputs td:first-child {
    padding-left: 1px;
}
.inputs th:first-child,
.inputs td:first-child {
    border-right: 1px solid #dcdcdc;
}
.inputs tbody tr:nth-child(even) {
    background: #e9e9e9;
}
.inputs svg {
    display: inline-block;
    width: 13px;
    height: 13px;
    margin-right: 3px;
    vertical-align: -3px;
}
.side-buttons {
    display: flex;
    flex-direction: column;
    justify-content: flex-end;
    gap: 9px;
    padding-bottom: 2px;
}
.btn {
    width: 69px;
    height: 21px;
    background: #fdfdfd;
    border: 1px solid #dedede;
}
.side-buttons .btn {
    width: 96px;
}
.btn.primary {
    border-color: #5aa5e6;
}
.dialog-footer {
    display: flex;
    justify-content: flex-end;
    gap: 6px;
    padding: 2px 6px 6px;
}

/* Terminal */
.terminal {
    display: flex;
    height: 139px;
    border-top: 1px solid #ccc;
    border-bottom: 1px solid #ccc;
}
.rail {
    width: 11px;
    display: flex;
    flex-direction: column;
    align-items: center;
    padding: 5px 0 3px;
}
.rail-label {
    flex: 1;
    width: 10px;
    margin-top: 4px;
    background: #c6d3e2;
    color: #555;
    font-size: 8px;
    line-height: 10px;
    writing-mode: vertical-rl;
    text-orientation: sideways;
    transform: rotate(180deg);
    padding-top: 1px;
}
.terminal-body {
    flex: 1;
    min-width: 0;
    display: flex;
    flex-direction: column;
    margin: 4px 0 3px;
    background: #fff;
    border-top: 1px solid #aaa;
    border-left: 1px solid #aaa;
}
.orders {
    width: 100%;
    height: 46px;
    border-collapse: collapse;
    table-layout: fixed;
    white-space: nowrap;
}
.c-id { width: 92px; }
.c-time { width: 126px; }
.c-type { width: 64px; }
.c-lots { width: 49px; }
.c-sym { width: 64px; }
.c-price { width: 70px; }
.c-profit { width: 105px; }
.orders th,
.orders td {
    font-weight: normal;
    line-height: 13px;
    text-align: right;
    padding-right: 2px;
    border-right: 1px solid #e2e2e2;
    border-bottom: 1px solid #e2e2e2;
}
.orders th:last-child,
.orders td:last-child {
    padding-right: 0;
    border-right: 0;
}
.orders .id {
    text-align: left;
    padding-left: 1px;
}
.orders small {
    color: #aaa;
    font-size: 7px;
}
.orders svg {
    display: inline-block;
    width: 12px;
    height: 12px;
    margin-right: 2px;
    vertical-align: -3px;
}
.orders .close-order {
    width: 10px;
    height: 10px;
    margin: 0 0 0 3px;
    color: #999;
    vertical-align: -2px;
}
.orders .balance td {
    background: #c3c3c3;
    font-weight: bold;
    border-color: #c3c3c3;
}
.orders .total {
    padding-right: 18px;
}
.terminal-tabs {
    margin-top: auto;
    height: 15px;
    padding-left: 0;
    background: #f0f0f0;
    border-top: 1px solid #777;
}
.terminal-tabs button {
    white-space: nowrap;
}
.terminal-tabs b {
    color: #e02020;
    font-size: 9px;
}

/* Strategy tester */
.strategy {
    display: flex;
    height: 23px;
    border-bottom: 1px solid #ccc;
}
.strategy .rail {
    padding: 4px 0 1px;
}
.strategy-body {
    flex: 1;
    display: flex;
    align-items: center;
    gap: 4px;
    margin: 3px 0 2px;
    padding-left: 4px;
    background: #fff;
    border: 1px solid #bbb;
    border-right: 0;
}
.dot {
    width: 6px;
    height: 6px;
    border-radius: 50%;
    background: #999;
}
.status {
    height: 3px;
}

/* Brand stamp */
.brand {
    position: absolute;
    z-index: 3;
    left: 435px;
    bottom: 4px;
    width: 200px;
    height: 108px;
    display: flex;
    align-items: center;
    gap: 5px;
    padding-left: 6px;
    background: #fff;
    overflow: hidden;
}
.logo {
    width: 42px;
    height: 44px;
    position: relative;
}
.brand-text {
    position: relative;
    display: flex;
    flex-direction: column;
    align-items: center;
    color: #0a48ea;
    font-weight: bold;
}
.brand-text strong {
    font-family: "Noto Sans CJK SC", sans-serif;
    font-size: 31px;
    line-height: 38px;
}
.brand-text span {
    font-family: "Noto Sans", sans-serif;
    font-size: 16px;
    line-height: 20px;
}
.mark {
    position: absolute;
    color: #ececec;
    font-size: 13px;
    transform: rotate(-45deg);
}
.m1 { left: 0; top: 14px; }
.m2 { left: 56px; top: 36px; }
.m3 { left: 8px; top: 86px; }
.m4 { left: 120px; top: 76px; }
```
